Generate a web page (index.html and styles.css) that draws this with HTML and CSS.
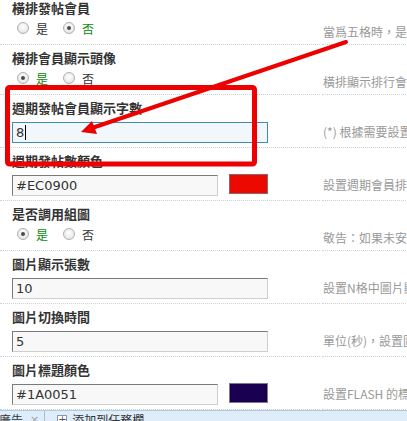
FILE: index.html
```html
<!DOCTYPE html>
<html>
	<head>
		<link rel="stylesheet" href="styles.css">
	</head>
	<body>

	<div class="page">
		<div class="row row-radio first">
			<div class="main">
				<div class="label">橫排發帖會員</div>
				<div class="radios">
					<span class="radio"></span><span class="opt">是</span>
					<span class="radio on"></span><span class="opt on">否</span>
				</div>
			</div>
			<div class="tip">當爲五格時，是否橫排顯示</div>
		</div>

		<div class="row row-radio">
			<div class="main">
				<div class="label">橫排會員顯示頭像</div>
				<div class="radios">
					<span class="radio on"></span><span class="opt on">是</span>
					<span class="radio"></span><span class="opt">否</span>
				</div>
			</div>
			<div class="tip">橫排顯示排行會員頭像</div>
		</div>

		<div class="row row-input">
			<div class="main">
				<div class="label">週期發帖會員顯示字數</div>
				<div class="field wide active">8<span class="caret"></span></div>
			</div>
			<div class="tip">(*) 根據需要設置字數</div>
		</div>

		<div class="row row-input">
			<div class="main">
				<div class="label">週期發帖數顏色</div>
				<div class="line">
					<div class="field short">#EC0900</div>
					<div class="swatch red"></div>
				</div>
			</div>
			<div class="tip">設置週期會員排行顏色</div>
		</div>

		<div class="row row-radio">
			<div class="main">
				<div class="label">是否調用組圖</div>
				<div class="radios">
					<span class="radio on"></span><span class="opt on">是</span>
					<span class="radio"></span><span class="opt">否</span>
				</div>
			</div>
			<div class="tip">敬告：如果未安裝組圖插件</div>
		</div>

		<div class="row row-input">
			<div class="main">
				<div class="label">圖片顯示張數</div>
				<div class="field wide">10</div>
			</div>
			<div class="tip">設置N格中圖片顯示張數</div>
		</div>

		<div class="row row-input">
			<div class="main">
				<div class="label">圖片切換時間</div>
				<div class="field wide">5</div>
			</div>
			<div class="tip">單位(秒)，設置圖片切換時間</div>
		</div>

		<div class="row row-input">
			<div class="main">
				<div class="label">圖片標題顏色</div>
				<div class="line">
					<div class="field short">#1A0051</div>
					<div class="swatch navy"></div>
				</div>
			</div>
			<div class="tip">設置FLASH 的標題顏色</div>
		</div>
	</div>

	<div class="taskbar">
		<span class="tab">廣告</span>
		<span class="close">×</span>
		<span class="sep"></span>
		<span class="plus">+</span>
		<span class="add">添加到任務欄</span>
	</div>

	<!-- annotation drawn over the form -->
	<svg class="mark" width="407" height="421" viewBox="0 0 407 421">
		<rect x="7.5" y="87.5" width="247" height="76.5" rx="2" fill="none" stroke="#ec0000" stroke-width="5"/>
		<line x1="346" y1="42" x2="92" y2="128" stroke="#ec0000" stroke-width="4" stroke-linecap="round"/>
		<polygon points="81,132 92,121 97,134" fill="#ec0000"/>
	</svg>

	</body>
</html>
```

FILE: styles.css
```css
html, body{
	margin: 0;
	padding: 0;
	background: #fff;
	overflow: hidden;
}
body{
	width: 407px;
	height: 421px;
	position: relative;
	font-family: "Noto Sans CJK TC", "Noto Sans CJK SC", sans-serif;
	color: #333;
}
.page{
	margin-top: -1px;
	width: 560px;
}
.row{
	display: flex;
}
.main{
	width: 308px;
	padding-left: 12px;
	margin-right: 2px;
	border-bottom: 1px dotted #c9d2d8;
}
.row-radio .main{
	padding-top: 4px;
	padding-bottom: 7px;
}
.row-radio.first .main{
	padding-top: 0;
}
.row-input .main{
	padding-top: 4px;
	padding-bottom: 4px;
}
.label{
	font-size: 13px;
	font-weight: bold;
	line-height: 18px;
	color: #333;
	white-space: nowrap;
}
.tip{
	flex: 1;
	padding-left: 1px;
	padding-top: 28px;
	font-size: 12px;
	line-height: 18px;
	color: #999;
	white-space: nowrap;
	border-bottom: 1px dotted #c9d2d8;
}
.row-radio.first .tip{
	padding-top: 24px;
}

/* radios */
.radios{
	display: flex;
	align-items: center;
	height: 18px;
	margin-top: 2px;
	padding-left: 5px;
	font-size: 12px;
}
.radio{
	box-sizing: border-box;
	width: 12px;
	height: 12px;
	border-radius: 50%;
	border: 1px solid #b0b0b0;
	background: radial-gradient(circle at 50% 40%, #ffffff, #dedede);
	position: relative;
}
.radio.on::after{
	content: '';
	position: absolute;
	left: 3px;
	top: 3px;
	width: 4px;
	height: 4px;
	border-radius: 50%;
	background: #4a4a4a;
}
.opt{
	margin-left: 7px;
	margin-right: 15px;
	color: #333;
}
.opt.on{
	color: #0a8a0a;
}

/* text fields */
.line{
	display: flex;
	margin-top: 5px;
}
.field{
	box-sizing: border-box;
	height: 21px;
	padding-left: 3px;
	font-family: "DejaVu Sans", sans-serif;
	font-size: 13px;
	line-height: 19px;
	color: #333;
	background: #f8f8f8;
	border: 1px solid;
	border-color: #7a7a7a #cfcfcf #cfcfcf #7a7a7a;
}
.field.wide{
	width: 256px;
	margin-top: 5px;
}
.field.short{
	width: 206px;
}
.field.active{
	border-color: #3b8db6;
	background: #f2f7fc;
}
.caret{
	display: inline-block;
	width: 1px;
	height: 15px;
	margin-left: 1px;
	vertical-align: -3px;
	background: #000;
}
.swatch{
	box-sizing: border-box;
	width: 39px;
	height: 20px;
	margin-left: 11px;
	margin-top: -1px;
	border: 1px solid #8a6a6a;
}
.swatch.red{
	background: #ec0900;
}
.swatch.navy{
	background: #1a0051;
	border-color: #7c7890;
}

/* bottom bar */
.taskbar{
	display: flex;
	align-items: flex-start;
	height: 30px;
	border-top: 1px solid #b0cbe0;
	background: #deedf9;
	font-size: 12px;
	line-height: 16px;
	padding-top: 1px;
	white-space: nowrap;
}
.tab{
	margin-left: -1px;
	color: #333;
}
.close{
	margin-left: 7px;
	color: #9aa4b0;
	font-family: "DejaVu Sans", sans-serif;
	font-size: 11px;
}
.sep{
	width: 1px;
	height: 20px;
	margin-left: 5px;
	margin-top: -1px;
	background: #a9c0d4;
}
.plus{
	box-sizing: border-box;
	width: 10px;
	height: 10px;
	margin-left: 12px;
	margin-top: 3px;
	border: 1px solid #8a97a4;
	font-family: "DejaVu Sans", sans-serif;
	font-size: 10px;
	line-height: 7px;
	text-align: center;
	color: #556;
	background: #fff;
}
.add{
	margin-left: 5px;
	color: #333;
}

.mark{
	position: absolute;
	left: 0;
	top: 0;
	pointer-events: none;
}
```
